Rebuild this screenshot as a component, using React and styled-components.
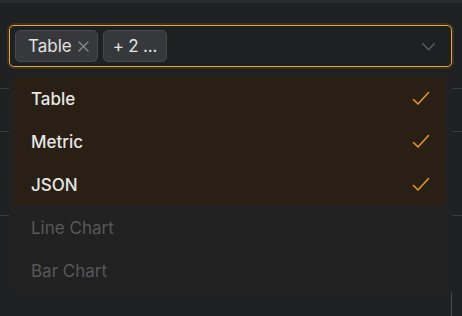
import { useState } from "react";
import styled, { createGlobalStyle } from "styled-components";

const options = [
  { id: "table", label: "Table" },
  { id: "metric", label: "Metric" },
  { id: "json", label: "JSON" },
  { id: "line", label: "Line Chart", disabled: true },
  { id: "bar", label: "Bar Chart", disabled: true },
];

function CheckIcon() {
  return (
    <svg width="18" height="18" viewBox="0 0 18 18" fill="none">
      <path
        d="M1.5 9.5 L6 14 L16.5 2.5"
        stroke="currentColor"
        strokeWidth="1.6"
        strokeLinecap="round"
        strokeLinejoin="round"
      />
    </svg>
  );
}

function ChevronIcon() {
  return (
    <svg width="13" height="8" viewBox="0 0 13 8" fill="none">
      <path
        d="M0.8 0.8 L6.5 6.8 L12.2 0.8"
        stroke="currentColor"
        strokeWidth="1.3"
        strokeLinecap="round"
        strokeLinejoin="round"
      />
    </svg>
  );
}

function CloseIcon() {
  return (
    <svg width="11" height="11" viewBox="0 0 11 11" fill="none">
      <path
        d="M1 1 L10 10 M10 1 L1 10"
        stroke="currentColor"
        strokeWidth="1.3"
        strokeLinecap="round"
      />
    </svg>
  );
}

function App() {
  const [selected, setSelected] = useState(["table", "metric", "json"]);

  const toggle = (option) => {
    if (option.disabled) return;
    setSelected(
      selected.includes(option.id)
        ? selected.filter((id) => id !== option.id)
        : [...selected, option.id]
    );
  };

  const first = options.find((o) => o.id === selected[0]);
  const rest = selected.length - 1;

  return (
    <>
      <GlobalStyle />
      <Page>
        <TopStrip />
        <Field>
          <SelectBox>
            <Tags>
              {first && (
                <Tag>
                  {first.label}
                  <TagRemove type="button" onClick={() => toggle(first)}>
                    <CloseIcon />
                  </TagRemove>
                </Tag>
              )}
              {rest > 0 && <Tag $more>+ {rest} ...</Tag>}
            </Tags>
            <Chevron>
              <ChevronIcon />
            </Chevron>
          </SelectBox>
          <Menu>
            {options.map((option) => {
              const isSelected = selected.includes(option.id);
              return (
                <MenuItem
                  key={option.id}
                  $selected={isSelected}
                  $disabled={option.disabled}
                  onClick={() => toggle(option)}
                >
                  {option.label}
                  {isSelected && (
                    <Check>
                      <CheckIcon />
                    </Check>
                  )}
                </MenuItem>
              );
            })}
          </Menu>
        </Field>
        <Backdrop>
          <BackRow $height={22} />
          <BackRow $height={43} />
          <BackRow $height={84} />
          <BackFooter />
        </Backdrop>
      </Page>
    </>
  );
}

const GlobalStyle = createGlobalStyle`
  html, body {
    margin: 0;
    padding: 0;
    background: #1f2022;
  }
  body {
    font-family: Inter, "Noto Sans", sans-serif;
  }
`;

const Page = styled.div`
  width: 462px;
  height: 316px;
  overflow: hidden;
  background: #1f2022;
`;

const TopStrip = styled.div`
  height: 3px;
  background: #2b2c2f;
  margin-bottom: 22px;
`;

const Field = styled.div`
  position: relative;
  margin: 0 10px 0 9px;
  z-index: 2;
`;

const SelectBox = styled.div`
  height: 42px;
  box-sizing: border-box;
  border: 1px solid #eba433;
  border-radius: 5px;
  box-shadow: 0 0 0 2px rgba(235, 164, 51, 0.12);
  display: flex;
  align-items: center;
  justify-content: space-between;
  padding: 0 16px 0 5px;
  background: #1f2022;
`;

const Tags = styled.div`
  display: flex;
  gap: 5px;
`;

const Tag = styled.div`
  height: 32px;
  box-sizing: border-box;
  display: flex;
  align-items: center;
  gap: 6px;
  padding: ${(p) => (p.$more ? "0 9px" : "0 8px 0 12px")};
  background: #37383b;
  border: 1px solid #47484b;
  border-radius: 5px;
  color: #e2e2e2;
  font-size: 17px;
  letter-spacing: ${(p) => (p.$more ? "-0.2px" : "0")};
`;

const TagRemove = styled.button`
  display: flex;
  align-items: center;
  padding: 0;
  border: 0;
  background: none;
  color: #8c8c8f;
  cursor: pointer;
  margin-top: 1px;
`;

const Chevron = styled.span`
  display: flex;
  color: #5c5d60;
  margin-top: 2px;
`;

const Menu = styled.div`
  position: absolute;
  top: 48px;
  left: 0;
  right: 0;
  padding: 4px 6px 4px 5px;
  background: #212121;
  border-radius: 6px;
`;

const MenuItem = styled.div`
  height: 43px;
  display: flex;
  align-items: center;
  justify-content: space-between;
  padding: 0 16px 0 17px;
  border-radius: 4px;
  font-size: 17px;
  font-weight: ${(p) => (p.$selected ? 500 : 400)};
  color: ${(p) => (p.$disabled ? "#58585a" : "#e6e6e6")};
  background: ${(p) => (p.$selected ? "#291f14" : "transparent")};
  cursor: ${(p) => (p.$disabled ? "default" : "pointer")};
`;

const Check = styled.span`
  display: flex;
  color: #df952c;
`;

const Backdrop = styled.div`
  display: flex;
  flex-direction: column;
`;

const BackRow = styled.div`
  height: ${(p) => p.$height}px;
  border-bottom: 1px solid #3a3b3e;
  box-sizing: border-box;
`;

const BackFooter = styled.div`
  height: 80px;
  margin-left: 451px;
  margin-top: 75px;
  border-left: 1px solid #4a4b4e;
`;

export default App;
